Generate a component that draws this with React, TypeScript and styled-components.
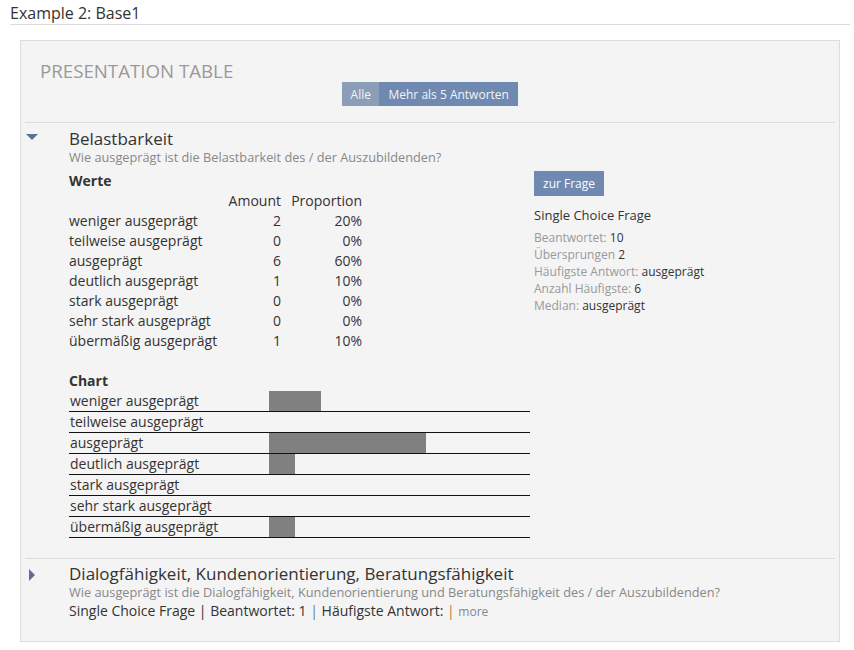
import React from "react";
import styled, { createGlobalStyle } from "styled-components";

const Global = createGlobalStyle`
  html, body { margin: 0; padding: 0; background: #fff; }
  body { font-family: "Open Sans", "Liberation Sans", sans-serif; color: #333; }
  * { box-sizing: border-box; }
`;

const Page = styled.div`
  padding: 3px 4px 0 10px;
`;

const PageTitle = styled.h2`
  margin: 0;
  font-size: 16px;
  font-weight: 400;
  line-height: 20px;
  padding-bottom: 1px;
  border-bottom: 1px solid #dcdcdc;
  color: #333;
`;

const Panel = styled.div`
  margin: 15px 0 0 10px;
  width: 820px;
  background: #f4f4f4;
  border: 1px solid #ddd;
  padding: 18px 4px 19px 4px;
`;

const PanelTitle = styled.div`
  font-size: 18.7px;
  line-height: 24px;
  color: #999;
  padding-left: 15px;
`;

const ButtonGroup = styled.div`
  display: flex;
  justify-content: center;
  margin-top: -1px;
`;

const FilterButton = styled.button<{ $active?: boolean }>`
  border: none;
  margin: 0;
  font-family: inherit;
  font-size: 12px;
  height: 24px;
  padding: 0 ${(p) => (p.$active ? "8.5px" : "9px")};
  color: #f2f4f8;
  background: ${(p) => (p.$active ? "#8b9db7" : "#6f89b0")};
`;

const Divider = styled.div<{ $top: number }>`
  height: 1px;
  background: #ddd;
  margin-top: ${(p) => p.$top}px;
`;

const Section = styled.div<{ $top: number }>`
  display: flex;
  margin-top: ${(p) => p.$top}px;
`;

const Toggle = styled.div`
  width: 44px;
  flex: none;
  display: flex;
  padding-left: 1px;
`;

const TriDown = styled.div`
  margin-top: 6px;
  width: 0;
  height: 0;
  border-left: 6px solid transparent;
  border-right: 6px solid transparent;
  border-top: 6px solid #5b7097;
`;

const TriRight = styled.div`
  margin: 6px 0 0 3px;
  width: 0;
  height: 0;
  border-top: 6px solid transparent;
  border-bottom: 6px solid transparent;
  border-left: 6px solid #5b7097;
`;

const SectionBody = styled.div`
  flex: 1;
  min-width: 0;
`;

const QTitle = styled.div`
  font-size: 17px;
  line-height: 21px;
  color: #333;
`;

const QSub = styled.div`
  font-size: 12.75px;
  line-height: 17px;
  color: #888;
`;

const Columns = styled.div`
  display: flex;
  gap: 4px;
`;

const LeftCol = styled.div`
  width: 461px;
  flex: none;
`;

const RightCol = styled.div`
  padding-top: 5px;
`;

const BlockTitle = styled.div<{ $top?: number }>`
  font-size: 14px;
  font-weight: 700;
  line-height: 20px;
  margin-top: ${(p) => p.$top ?? 0}px;
`;

const ValueTable = styled.table`
  border-collapse: collapse;
  font-size: 14px;
  line-height: 20px;
  td, th { padding: 0; font-weight: 400; height: 20px; }
`;

const LabelCell = styled.td`
  width: 152px;
  text-align: left;
`;

const NumCell = styled.td<{ $w: number }>`
  width: ${(p) => p.$w}px;
  text-align: right;
`;

const HeadCell = styled.th<{ $w: number }>`
  width: ${(p) => p.$w}px;
  text-align: right;
`;

const Chart = styled.div`
  width: 461px;
`;

const ChartRow = styled.div`
  display: flex;
  height: 21px;
  border-bottom: 1px solid #111;
  font-size: 14px;
  line-height: 20px;
`;

const ChartLabel = styled.div`
  width: 200px;
  flex: none;
  padding-left: 1px;
`;

const BarTrack = styled.div`
  flex: 1;
  display: flex;
`;

const Bar = styled.div`
  height: 20px;
  background: #808080;
`;

const ActionButton = styled.button`
  border: none;
  margin: 0;
  font-family: inherit;
  font-size: 12px;
  height: 25px;
  padding: 0 9px;
  color: #fff;
  background: #6f89b0;
`;

const TypeLabel = styled.div`
  font-size: 13px;
  line-height: 18px;
  margin-top: 10px;
  margin-bottom: 5px;
`;

const Stat = styled.div`
  font-size: 12px;
  line-height: 17px;
  color: #999;
  span { color: #333; }
`;

const Summary = styled.div`
  font-size: 14px;
  line-height: 20px;
  color: #333;
`;

const Sep = styled.span<{ $c: string }>`
  color: ${(p) => p.$c};
`;

const More = styled.span`
  font-size: 12px;
  color: #7a8799;
`;

const rows = [
  { label: "weniger ausgeprägt", amount: 2, pct: 20 },
  { label: "teilweise ausgeprägt", amount: 0, pct: 0 },
  { label: "ausgeprägt", amount: 6, pct: 60 },
  { label: "deutlich ausgeprägt", amount: 1, pct: 10 },
  { label: "stark ausgeprägt", amount: 0, pct: 0 },
  { label: "sehr stark ausgeprägt", amount: 0, pct: 0 },
  { label: "übermäßig ausgeprägt", amount: 1, pct: 10 },
];

export default function App() {
  return (
    <Page>
      <Global />
      <PageTitle>Example 2: Base1</PageTitle>
      <Panel>
        <PanelTitle>PRESENTATION TABLE</PanelTitle>
        <ButtonGroup>
          <FilterButton $active>Alle</FilterButton>
          <FilterButton>Mehr als 5 Antworten</FilterButton>
        </ButtonGroup>
        <Divider $top={16} />
        <Section $top={5}>
          <Toggle>
            <TriDown />
          </Toggle>
          <SectionBody>
            <QTitle>Belastbarkeit</QTitle>
            <QSub>Wie ausgeprägt ist die Belastbarkeit des / der Auszubildenden?</QSub>
            <Columns>
              <LeftCol>
                <BlockTitle $top={5}>Werte</BlockTitle>
                <ValueTable>
                  <thead>
                    <tr>
                      <LabelCell />
                      <HeadCell $w={60}>Amount</HeadCell>
                      <HeadCell $w={81}>Proportion</HeadCell>
                    </tr>
                  </thead>
                  <tbody>
                    {rows.map((r) => (
                      <tr key={r.label}>
                        <LabelCell>{r.label}</LabelCell>
                        <NumCell $w={60}>{r.amount}</NumCell>
                        <NumCell $w={81}>{r.pct}%</NumCell>
                      </tr>
                    ))}
                  </tbody>
                </ValueTable>
                <BlockTitle $top={20}>Chart</BlockTitle>
                <Chart>
                  {rows.map((r) => (
                    <ChartRow key={r.label}>
                      <ChartLabel>{r.label}</ChartLabel>
                      <BarTrack>
                        {r.pct > 0 && <Bar style={{ width: `${r.pct}%` }} />}
                      </BarTrack>
                    </ChartRow>
                  ))}
                </Chart>
              </LeftCol>
              <RightCol>
                <ActionButton>zur Frage</ActionButton>
                <TypeLabel>Single Choice Frage</TypeLabel>
                <Stat>Beantwortet: <span>10</span></Stat>
                <Stat>Übersprungen <span>2</span></Stat>
                <Stat>Häufigste Antwort: <span>ausgeprägt</span></Stat>
                <Stat>Anzahl Häufigste: <span>6</span></Stat>
                <Stat>Median: <span>ausgeprägt</span></Stat>
              </RightCol>
            </Columns>
          </SectionBody>
        </Section>
        <Divider $top={20} />
        <Section $top={4}>
          <Toggle>
            <TriRight />
          </Toggle>
          <SectionBody>
            <QTitle>Dialogfähigkeit, Kundenorientierung, Beratungsfähigkeit</QTitle>
            <QSub>
              Wie ausgeprägt ist die Dialogfähigkeit, Kundenorientierung und Beratungsfähigkeit des / der Auszubildenden?
            </QSub>
            <Summary>
              Single Choice Frage <Sep $c="#333">|</Sep> Beantwortet: 1 <Sep $c="#5b7ab0">|</Sep> Häufigste Antwort:{" "}
              <Sep $c="#c0772f">|</Sep> <More>more</More>
            </Summary>
          </SectionBody>
        </Section>
      </Panel>
    </Page>
  );
}
